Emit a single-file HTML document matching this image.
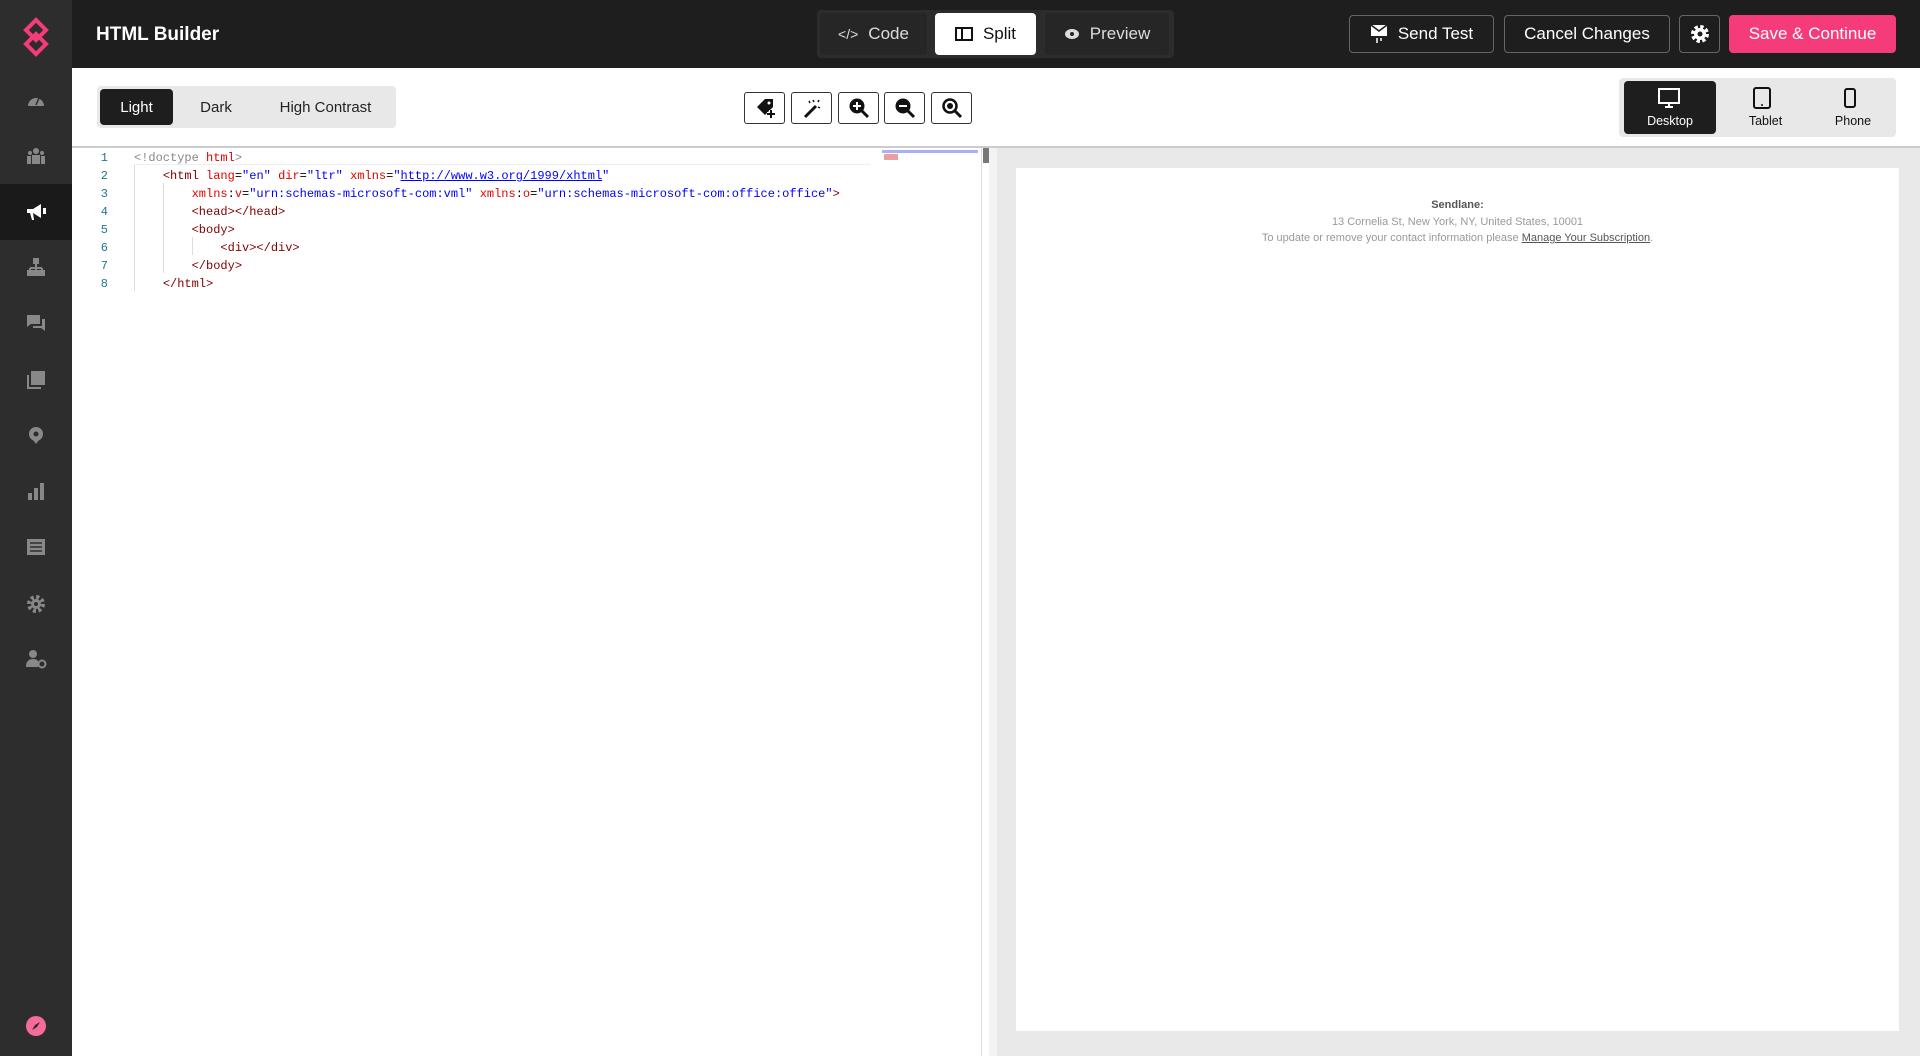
<!DOCTYPE html>
<html><head><meta charset="utf-8"><style>
*{box-sizing:border-box;margin:0;padding:0}
body{width:1920px;height:1056px;overflow:hidden;font-family:"Liberation Sans",sans-serif;background:#fff;position:relative}
.abs{position:absolute}
#side{left:0;top:0;width:72px;height:1056px;background:#2d2d2d}
#top{left:72px;top:0;width:1848px;height:68px;background:#1e1e1e}
.si{position:absolute;left:0;width:72px;height:56px;display:flex;align-items:center;justify-content:center}
.btn{position:absolute;border:1px solid #666;border-radius:4px;color:#fff;font-size:17px;display:flex;align-items:center;justify-content:center;gap:10px}
.seg{position:absolute;display:flex;align-items:center;justify-content:center;font-size:17px;color:#ddd;border-radius:4px;gap:10px}
.ib{position:absolute;top:92px;width:41px;height:32px;border:1px solid #333;border-radius:3px;display:flex;align-items:center;justify-content:center;background:#fff}
.code{position:absolute;left:0;font-family:"Liberation Mono",monospace;font-size:12px;white-space:pre;color:#000}
.ln{position:absolute;width:112px;text-align:right;padding-right:4px;font-family:"Liberation Mono",monospace;font-size:12px;color:#237893}
.t{color:#800000}.a{color:#e50000}.v{color:#0000ff}
</style></head><body>
<div id="side" class="abs">
  <svg class="abs" style="left:21px;top:17px" width="30" height="40" viewBox="0 0 30 40"><path d="M15 3 L25 13 L15 23 L5 13 Z M15 17 L25 27 L15 37 L5 27 Z" fill="none" stroke="#f53b7a" stroke-width="4"/></svg>
  <div class="si" style="top:72px"><svg width="20" height="16"><path d="M2 14 A8 8 0 1 1 18 14 Z" fill="#888"/><path d="M10 13 L13 6" stroke="#2d2d2d" stroke-width="1.5"/></svg></div>
  <div class="si" style="top:128px"><svg width="20" height="18"><circle cx="10" cy="4" r="3" fill="#888"/><circle cx="4" cy="6" r="2" fill="#888"/><circle cx="16" cy="6" r="2" fill="#888"/><rect x="6" y="8" width="8" height="9" fill="#888"/><rect x="1" y="9" width="4" height="8" fill="#888"/><rect x="15" y="9" width="4" height="8" fill="#888"/></svg></div>
  <div class="si" style="top:184px;background:#1a1a1a"><svg width="22" height="20"><path d="M2 7 H8 L16 2 V16 L8 11 H2 Z M5 11 L7 18 H9 L8 11" fill="#fff"/><rect x="18" y="6" width="3" height="6" fill="#fff"/></svg></div>
  <div class="si" style="top:239px"><svg width="20" height="20"><rect x="7" y="1" width="6" height="6" fill="#888"/><path d="M10 7V11M4 11H16M4 11V13M16 11V13M10 11V13" stroke="#888" stroke-width="2"/><rect x="1" y="13" width="6" height="6" fill="#888"/><rect x="13" y="13" width="6" height="6" fill="#888"/><rect x="7" y="13" width="6" height="6" fill="#888"/></svg></div>
  <div class="si" style="top:295px"><svg width="20" height="20"><path d="M1 2H14V11H5L1 14Z" fill="#888"/><path d="M16 6H19V18L15 15H7V13H16Z" fill="#888"/></svg></div>
  <div class="si" style="top:352px"><svg width="20" height="20"><rect x="5" y="1" width="14" height="14" fill="#888"/><path d="M2 5V18H15" stroke="#888" stroke-width="2" fill="none"/></svg></div>
  <div class="si" style="top:407px"><svg width="20" height="20"><circle cx="10" cy="9" r="7" fill="#888"/><path d="M7 15 L10 19 L13 15Z" fill="#888"/><circle cx="10" cy="9" r="2.5" fill="#2d2d2d"/></svg></div>
  <div class="si" style="top:463px"><svg width="20" height="20"><rect x="2" y="12" width="4" height="7" fill="#888"/><rect x="8" y="7" width="4" height="12" fill="#888"/><rect x="14" y="2" width="4" height="17" fill="#888"/></svg></div>
  <div class="si" style="top:519px"><svg width="20" height="18"><rect x="1" y="1" width="18" height="16" fill="#888"/><path d="M4 5H16M4 9H16M4 13H16" stroke="#2d2d2d" stroke-width="1.5"/></svg></div>
  <div class="si" style="top:576px"><svg width="20" height="20"><circle cx="10" cy="10" r="7" fill="none" stroke="#888" stroke-width="4" stroke-dasharray="3 2.5"/><circle cx="10" cy="10" r="5" fill="#888"/><circle cx="10" cy="10" r="2" fill="#2d2d2d"/></svg></div>
  <div class="si" style="top:631px"><svg width="22" height="20"><circle cx="8" cy="5" r="4" fill="#888"/><path d="M1 18 Q1 10 8 10 Q12 10 13 12 V18Z" fill="#888"/><circle cx="17" cy="15" r="3.5" fill="none" stroke="#888" stroke-width="2"/></svg></div>
  <div class="si" style="top:998px"><svg width="22" height="22"><circle cx="11" cy="11" r="10" fill="#f56b9b"/><path d="M15 7 L12 12 L7 15 L10 10Z" fill="#2d2d2d"/></svg></div>
</div>
<div id="top" class="abs"></div>
<div class="abs" style="left:96px;top:24px;color:#fff;font-size:19px;font-weight:bold">HTML Builder</div>
<div class="abs" style="left:817px;top:10px;width:357px;height:48px;background:#2c2c2c;border-radius:4px"></div>
<div class="seg" style="left:820px;top:13px;width:107px;height:42px;background:#262626"><span style="font-size:14px">&lt;/&gt;</span>Code</div>
<div class="seg" style="left:935px;top:13px;width:101px;height:42px;background:#fff;color:#111"><svg width="18" height="14"><rect x="1" y="1" width="16" height="12" fill="none" stroke="#111" stroke-width="2"/><path d="M7 1V13" stroke="#111" stroke-width="2"/></svg>Split</div>
<div class="seg" style="left:1045px;top:13px;width:124px;height:42px;background:#262626"><svg width="16" height="12"><ellipse cx="8" cy="6" rx="7" ry="5" fill="#ddd"/><circle cx="8" cy="6" r="2" fill="#262626"/></svg>Preview</div>
<div class="btn" style="left:1349px;top:15px;width:145px;height:38px"><svg width="18" height="20"><path d="M1 1H17V12H1Z" fill="#fff"/><path d="M1 1L9 7L17 1" stroke="#1e1e1e" stroke-width="1.5" fill="none"/><path d="M7 14V19M11 14V17" stroke="#fff" stroke-width="1.5"/></svg>Send Test</div>
<div class="btn" style="left:1504px;top:15px;width:166px;height:38px">Cancel Changes</div>
<div class="btn" style="left:1679px;top:15px;width:41px;height:38px"><svg width="20" height="20"><circle cx="10" cy="10" r="7" fill="none" stroke="#fff" stroke-width="4" stroke-dasharray="3.2 2.3"/><circle cx="10" cy="10" r="6" fill="#fff"/><circle cx="10" cy="10" r="2.5" fill="#1e1e1e"/></svg></div>
<div class="btn" style="left:1729px;top:15px;width:167px;height:38px;background:#f53b7a;border-color:#f53b7a">Save &amp; Continue</div>

<div class="abs" style="left:97px;top:86px;width:299px;height:42px;background:#e8e8e8;border-radius:4px"></div>
<div class="seg" style="left:100px;top:89px;width:73px;height:36px;background:#1e1e1e;color:#fff;font-size:15px">Light</div>
<div class="seg" style="left:185px;top:89px;width:62px;height:36px;color:#222;font-size:15px">Dark</div>
<div class="seg" style="left:268px;top:89px;width:115px;height:36px;color:#222;font-size:15px">High Contrast</div>

<div class="ib" style="left:744px"><svg width="22" height="22"><path d="M3 10L11 2H19V10L11 18Z" fill="#111"/><circle cx="15" cy="6" r="1.5" fill="#fff"/><path d="M17 13V21M13 17H21" stroke="#fff" stroke-width="4"/><path d="M17 13V21M13 17H21" stroke="#111" stroke-width="2"/></svg></div>
<div class="ib" style="left:791px"><svg width="22" height="22"><path d="M4 20L15 9" stroke="#111" stroke-width="3"/><path d="M12 3L13 5M18 3L17 5M19 11L17 10M8 4L9 6" stroke="#111" stroke-width="1.5"/></svg></div>
<div class="ib" style="left:838px"><svg width="22" height="22"><circle cx="9" cy="9" r="7.5" fill="#111"/><path d="M14 14L20 20" stroke="#111" stroke-width="3"/><path d="M5 9H13M9 5V13" stroke="#fff" stroke-width="2"/></svg></div>
<div class="ib" style="left:884px"><svg width="22" height="22"><circle cx="9" cy="9" r="7.5" fill="#111"/><path d="M14 14L20 20" stroke="#111" stroke-width="3"/><path d="M5 9H13" stroke="#fff" stroke-width="2"/></svg></div>
<div class="ib" style="left:931px"><svg width="22" height="22"><circle cx="9" cy="9" r="6.5" fill="none" stroke="#111" stroke-width="2.5"/><path d="M14 14L20 20" stroke="#111" stroke-width="3"/><circle cx="9" cy="9" r="3" fill="#111"/></svg></div>

<div class="abs" style="left:1619px;top:78px;width:277px;height:59px;background:#e8e8e8;border-radius:4px"></div>
<div class="abs" style="left:1624px;top:81px;width:92px;height:53px;background:#1e1e1e;border-radius:4px"></div>
<svg class="abs" style="left:1657px;top:88px" width="24" height="20"><rect x="2" y="1" width="20" height="14" fill="none" stroke="#fff" stroke-width="2"/><path d="M12 15V19M8 19H16" stroke="#fff" stroke-width="2"/></svg>
<div class="abs" style="left:1624px;top:114px;width:92px;text-align:center;color:#fff;font-size:12.5px">Desktop</div>
<svg class="abs" style="left:1752px;top:87px" width="20" height="22"><rect x="2" y="1" width="16" height="20" rx="2" fill="none" stroke="#111" stroke-width="2"/><circle cx="10" cy="18" r="1" fill="#111"/></svg>
<div class="abs" style="left:1723px;top:114px;width:85px;text-align:center;color:#111;font-size:12.5px">Tablet</div>
<svg class="abs" style="left:1843px;top:88px" width="14" height="20"><rect x="2" y="1" width="10" height="18" rx="2" fill="none" stroke="#111" stroke-width="2"/></svg>
<div class="abs" style="left:1813px;top:114px;width:80px;text-align:center;color:#111;font-size:12.5px">Phone</div>

<div class="abs" style="left:72px;top:146px;width:1848px;height:2px;background:#ccc"></div>

<div class="abs" style="left:134px;top:148px;width:736px;height:17px;border-bottom:1px solid #eee"></div>
<div class="abs" style="left:134px;top:165px;width:1px;height:126px;background:#ddd"></div>
<div class="abs" style="left:163px;top:183px;width:1px;height:90px;background:#ddd"></div>
<div class="abs" style="left:192px;top:237px;width:1px;height:18px;background:#ddd"></div>
<div class="ln" style="top:149px;line-height:18px">1<br>2<br>3<br>4<br>5<br>6<br>7<br>8</div>
<div class="code" style="left:134px;top:149px;line-height:18px"><span style="color:#888">&lt;!doctype</span> <span class="a">html</span><span style="color:#888">&gt;</span>
    <span class="t">&lt;html</span> <span class="a">lang</span>=<span class="v">"en"</span> <span class="a">dir</span>=<span class="v">"ltr"</span> <span class="a">xmlns</span>=<span class="v">"<u>http://www.w3.org/1999/xhtml</u>"</span>
        <span class="a">xmlns</span>:<span class="a">v</span>=<span class="v">"urn:schemas-microsoft-com:vml"</span> <span class="a">xmlns</span>:<span class="a">o</span>=<span class="v">"urn:schemas-microsoft-com:office:office"</span><span class="t">&gt;</span>
        <span class="t">&lt;head&gt;&lt;/head&gt;</span>
        <span class="t">&lt;body&gt;</span>
            <span class="t">&lt;div&gt;&lt;/div&gt;</span>
        <span class="t">&lt;/body&gt;</span>
    <span class="t">&lt;/html&gt;</span></div>
<div class="abs" style="left:882px;top:150px;width:96px;height:3px;background:#aab0f0"></div>
<div class="abs" style="left:884px;top:154px;width:14px;height:6px;background:#e8a0a0"></div>
<div class="abs" style="left:981px;top:148px;width:1px;height:908px;background:#ddd"></div>
<div class="abs" style="left:983px;top:148px;width:6px;height:15px;background:#777"></div>
<div class="abs" style="left:989px;top:148px;width:8px;height:908px;background:#f3f3f3"></div>

<div class="abs" style="left:997px;top:148px;width:923px;height:908px;background:#e9e9e9"></div>
<div class="abs" style="left:1016px;top:168px;width:883px;height:863px;background:#fff"></div>
<div class="abs" style="left:1016px;top:197px;width:883px;text-align:center;font-size:11px;color:#666;line-height:16.5px"><b style="color:#555">Sendlane:</b><br><span style="color:#999">13 Cornelia St, New York, NY, United States, 10001</span><br><span style="color:#999">To update or remove your contact information please </span><u style="color:#555">Manage Your Subscription</u><span style="color:#999">.</span></div>
</body></html>
